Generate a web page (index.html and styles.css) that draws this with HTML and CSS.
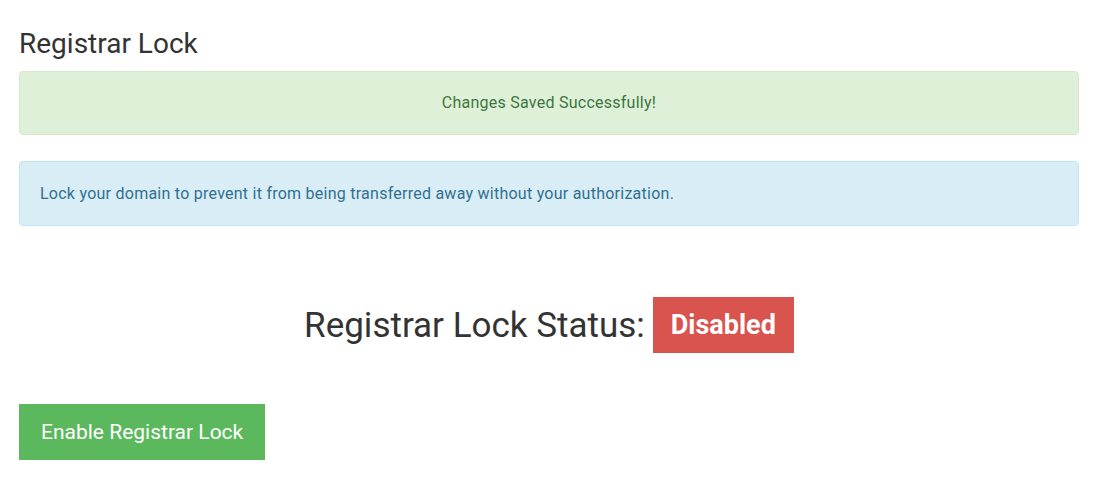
FILE: index.html
```html
<!DOCTYPE html>
<html>
<head>
<meta charset="utf-8">
<link rel="stylesheet" href="styles.css">
</head>
<body>
<div class="page">
  <h1 class="title">Registrar Lock</h1>
  <div class="alert alert-success">Changes Saved Successfully!</div>
  <div class="alert alert-info">Lock your domain to prevent it from being transferred away without your authorization.</div>
  <div class="status">
    <span class="status-text">Registrar Lock Status:</span>
    <span class="badge">Disabled</span>
  </div>
  <div class="actions">
    <button class="btn">Enable Registrar Lock</button>
  </div>
</div>
</body>
</html>
```
FILE: styles.css
```css
html, body {
  margin: 0;
  padding: 0;
  background: #fff;
}
body {
  font-family: Roboto, "Noto Sans", sans-serif;
  color: #333;
}
.page {
  width: 1060px;
  padding-left: 19px;
  padding-top: 27px;
}
.title {
  margin: 0;
  font-size: 28px;
  font-weight: 400;
  line-height: 34px;
  color: #333;
}
.alert {
  border: 1px solid;
  border-radius: 4px;
  font-size: 16px;
  letter-spacing: 0.25px;
}
.alert-success {
  margin-top: 10px;
  background: #dff0d8;
  border-color: #d6e9c6;
  color: #3c763d;
  text-align: center;
  padding: 20px 20px;
  line-height: 22px;
}
.alert-info {
  margin-top: 26px;
  background: #d9edf7;
  border-color: #bce8f1;
  color: #31708f;
  padding: 20px 20px;
  line-height: 23px;
}
.status {
  margin-top: 71px;
  display: flex;
  justify-content: center;
  align-items: center;
  gap: 8px;
}
.status-text {
  font-size: 35px;
  color: #333;
}
.badge {
  background: #d9534f;
  color: #fff;
  font-weight: 700;
  font-size: 27px;
  height: 56px;
  padding: 0 18px;
  display: flex;
  align-items: center;
}
.actions {
  margin-top: 51px;
}
.btn {
  background: #5cb85c;
  color: #fff;
  border: none;
  font-family: inherit;
  font-size: 21px;
  height: 56px;
  padding: 0 22px;
  cursor: pointer;
}
```
